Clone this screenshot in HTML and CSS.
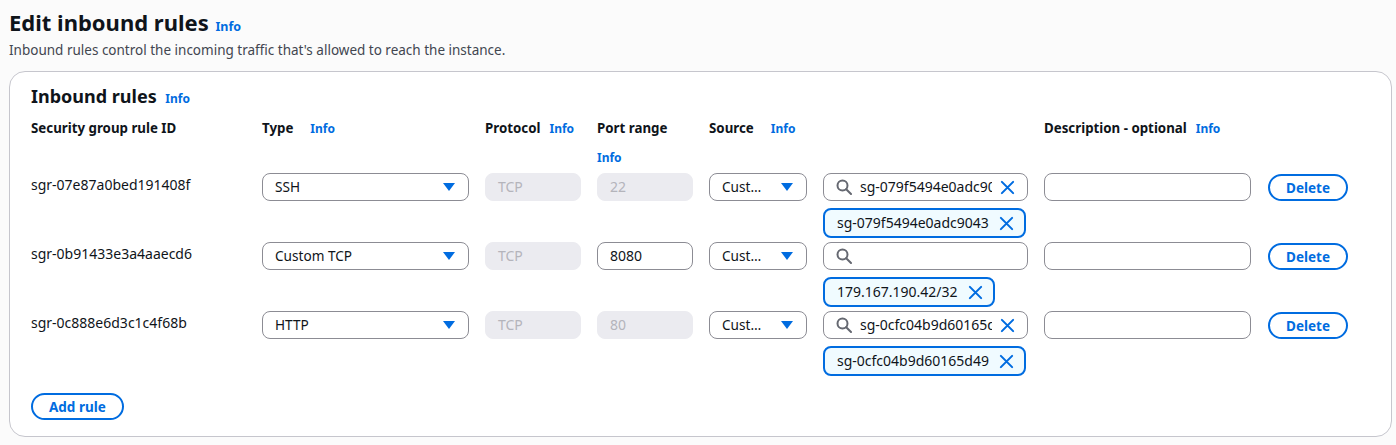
FILE: index.html
```html
<!DOCTYPE html>
<html lang="en">
<head>
<meta charset="utf-8">
<title>Edit inbound rules</title>
<link rel="stylesheet" href="styles.css">
</head>
<body>
<div class="page">
  <header class="page-head">
    <h1 class="title">Edit inbound rules <a class="info info-lg">Info</a></h1>
    <p class="subtitle">Inbound rules control the incoming traffic that's allowed to reach the instance.</p>
  </header>

  <section class="panel">
    <h2 class="panel-title">Inbound rules <a class="info">Info</a></h2>

    <div class="grid head">
      <div class="hcell">Security group rule ID</div>
      <div class="hcell wide-gap">Type <a class="info">Info</a></div>
      <div class="hcell">Protocol <a class="info">Info</a></div>
      <div class="hcell wrap">Port range <a class="info">Info</a></div>
      <div class="hcell wide-gap span2">Source <a class="info">Info</a></div>
      <div class="hcell">Description - optional <a class="info">Info</a></div>
      <div></div>
    </div>

    <div class="grid rule">
      <div class="rid">sgr-07e87a0bed191408f</div>
      <div class="select"><span>SSH</span><svg class="caret" viewBox="0 0 12 8"><path d="M0 0h12L6 8z"/></svg></div>
      <div class="input disabled">TCP</div>
      <div class="input disabled">22</div>
      <div class="select"><span>Cust…</span><svg class="caret" viewBox="0 0 12 8"><path d="M0 0h12L6 8z"/></svg></div>
      <div class="input search"><svg class="mag" viewBox="0 0 16 16"><circle cx="6.5" cy="6.5" r="5"/><path d="M10.2 10.2 15 15"/></svg><span class="sval">sg-079f5494e0adc9043</span><svg class="x" viewBox="0 0 16 16"><path d="M2 2l12 12M14 2 2 14"/></svg></div>
      <div class="input"></div>
      <div class="btn-cell"><button class="btn">Delete</button></div>
      <div class="token-cell"><span class="token">sg-079f5494e0adc9043<svg class="x" viewBox="0 0 16 16"><path d="M2 2l12 12M14 2 2 14"/></svg></span></div>
    </div>

    <div class="grid rule">
      <div class="rid">sgr-0b91433e3a4aaecd6</div>
      <div class="select"><span>Custom TCP</span><svg class="caret" viewBox="0 0 12 8"><path d="M0 0h12L6 8z"/></svg></div>
      <div class="input disabled">TCP</div>
      <div class="input">8080</div>
      <div class="select"><span>Cust…</span><svg class="caret" viewBox="0 0 12 8"><path d="M0 0h12L6 8z"/></svg></div>
      <div class="input search"><svg class="mag" viewBox="0 0 16 16"><circle cx="6.5" cy="6.5" r="5"/><path d="M10.2 10.2 15 15"/></svg></div>
      <div class="input"></div>
      <div class="btn-cell"><button class="btn">Delete</button></div>
      <div class="token-cell"><span class="token">179.167.190.42/32<svg class="x" viewBox="0 0 16 16"><path d="M2 2l12 12M14 2 2 14"/></svg></span></div>
    </div>

    <div class="grid rule">
      <div class="rid">sgr-0c888e6d3c1c4f68b</div>
      <div class="select"><span>HTTP</span><svg class="caret" viewBox="0 0 12 8"><path d="M0 0h12L6 8z"/></svg></div>
      <div class="input disabled">TCP</div>
      <div class="input disabled">80</div>
      <div class="select"><span>Cust…</span><svg class="caret" viewBox="0 0 12 8"><path d="M0 0h12L6 8z"/></svg></div>
      <div class="input search"><svg class="mag" viewBox="0 0 16 16"><circle cx="6.5" cy="6.5" r="5"/><path d="M10.2 10.2 15 15"/></svg><span class="sval">sg-0cfc04b9d60165d49</span><svg class="x" viewBox="0 0 16 16"><path d="M2 2l12 12M14 2 2 14"/></svg></div>
      <div class="input"></div>
      <div class="btn-cell"><button class="btn">Delete</button></div>
      <div class="token-cell"><span class="token">sg-0cfc04b9d60165d49<svg class="x" viewBox="0 0 16 16"><path d="M2 2l12 12M14 2 2 14"/></svg></span></div>
    </div>

    <div class="actions"><button class="btn">Add rule</button></div>
  </section>
</div>
</body>
</html>
```

FILE: styles.css
```css
* { box-sizing: border-box; }
html, body { margin: 0; }
body {
  background: #fbfbfb;
  color: #0f141a;
  font-family: "Noto Sans", "Open Sans", Arial, sans-serif;
  font-size: 14px;
}
.page { padding: 8px 4px 8px 9px; }
.page-head { padding-bottom: 12px; }
.title {
  margin: 0;
  font-size: 22px;
  line-height: 28px;
  font-weight: 700;
}
.subtitle {
  margin: 0;
  font-size: 13.5px;
  line-height: 18px;
  color: #424650;
}
.info {
  color: #006ce0;
  font-size: 12px;
  font-weight: 700;
  margin-left: 4px;
}
.info-lg { font-size: 12.5px; margin-left: 1px; }
.panel {
  background: #fff;
  border: 1px solid #c6c6cd;
  border-radius: 16px;
  padding: 12px 21px 16px 21px;
}
.panel-title {
  margin: 0 0 10px;
  font-size: 18px;
  line-height: 24px;
  font-weight: 700;
}
.grid {
  display: grid;
  grid-template-columns: 215px 207px 96px 96px 98px 205px 207px auto;
  column-gap: 16px;
}
.head { margin-bottom: 8px; }
.hcell {
  font-weight: 700;
  font-size: 13.3px;
  line-height: 14px;
  display: flex;
  flex-wrap: wrap;
  align-items: baseline;
  column-gap: 9px;
  row-gap: 16px;
}
.hcell .info { margin-left: 0; }
.wide-gap { column-gap: 17px; }
.span2 { grid-column: span 2; }
.wrap .info { flex-basis: 100%; }
.rule { row-gap: 7px; margin-bottom: 4px; }
.rid { padding-top: 3px; line-height: 18px; }
.select, .input {
  height: 28px;
  border: 1px solid #8c8c94;
  border-radius: 8px;
  display: flex;
  align-items: center;
  padding: 0 12px;
  line-height: 18px;
  white-space: nowrap;
  overflow: hidden;
  background: #fff;
}
.select { justify-content: space-between; font-size: 13.6px; }
.caret { width: 12px; height: 8px; fill: #006ce0; flex: none; margin-right: 1px; }
.input.disabled {
  background: #ebebf0;
  border-color: #ebebf0;
  color: #b4b4bb;
}
.search { padding: 0 12px 0 12px; gap: 8px; }
.mag {
  width: 16px; height: 16px; flex: none;
  fill: none; stroke: #656871; stroke-width: 2; stroke-linecap: round;
}
.sval { flex: 1; overflow: hidden; min-width: 0; }
.x {
  width: 15px; height: 15px; flex: none;
  fill: none; stroke: #006ce0; stroke-width: 2.2; stroke-linecap: round;
}
.token-cell { grid-column: 6; }
.token {
  display: inline-flex;
  align-items: center;
  gap: 10px;
  height: 30px;
  padding: 0 10px 0 12px;
  border: 2px solid #006ce0;
  border-radius: 8px;
  background: #f0fbff;
  line-height: 18px;
}
.btn-cell { padding-left: 1px; }
.btn {
  font-family: inherit;
  font-size: 13.5px;
  font-weight: 700;
  color: #006ce0;
  background: #fff;
  border: 2px solid #006ce0;
  border-radius: 20px;
  height: 27px;
  padding: 0 16px;
  line-height: 18px;
  margin-top: 1px;
}
.actions { padding-top: 13px; }
.actions .btn { margin-top: 0; }
```
